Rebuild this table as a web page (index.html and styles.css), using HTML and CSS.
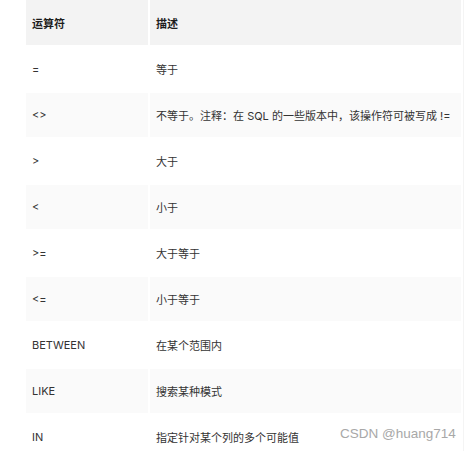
FILE: index.html
```html
<!DOCTYPE html>
<html lang="zh">
<head>
<meta charset="utf-8">
<link rel="stylesheet" href="styles.css">
</head>
<body>
<div class="page">
  <table class="ops">
    <thead>
      <tr><th class="c1">运算符</th><th class="c2">描述</th></tr>
    </thead>
    <tbody>
      <tr><td>=</td><td>等于</td></tr>
      <tr class="alt"><td>&lt;&gt;</td><td>不等于。注释：在 SQL 的一些版本中，该操作符可被写成 !=</td></tr>
      <tr><td>&gt;</td><td>大于</td></tr>
      <tr class="alt"><td>&lt;</td><td>小于</td></tr>
      <tr><td>&gt;=</td><td>大于等于</td></tr>
      <tr class="alt"><td>&lt;=</td><td>小于等于</td></tr>
      <tr><td>BETWEEN</td><td>在某个范围内</td></tr>
      <tr class="alt"><td>LIKE</td><td>搜索某种模式</td></tr>
      <tr><td>IN</td><td>指定针对某个列的多个可能值</td></tr>
    </tbody>
  </table>
  <div class="watermark">CSDN @huang714</div>
</div>
</body>
</html>
```
FILE: styles.css
```css
html, body {
  margin: 0;
  padding: 0;
  background: #ffffff;
}
.page {
  position: relative;
  width: 464px;
  height: 451px;
  overflow: hidden;
  border-right: 1px solid #f4f4f4;
  box-sizing: border-box;
}
.ops {
  border-collapse: separate;
  border-spacing: 2px;
  margin: -2px 0 0 24px;
  font-family: Inter, "Noto Sans CJK SC", sans-serif;
  font-size: 11px;
  color: #333333;
  table-layout: fixed;
}
.ops th, .ops td {
  padding: 0 6px;
  text-align: left;
  vertical-align: middle;
  white-space: nowrap;
}
.ops th {
  height: 45px;
  background: #f3f3f3;
  font-weight: 700;
  color: #1d1d1d;
}
.ops td {
  height: 44px;
}
.ops .c1 { width: 111px; }
.ops .c2 { width: 299px; }
.ops tr.alt td {
  background: #fafafa;
}
.watermark {
  position: absolute;
  left: 340px;
  top: 426px;
  font-family: "Liberation Sans", sans-serif;
  font-size: 13.5px;
  color: #a8a8a8;
  white-space: nowrap;
}
```
